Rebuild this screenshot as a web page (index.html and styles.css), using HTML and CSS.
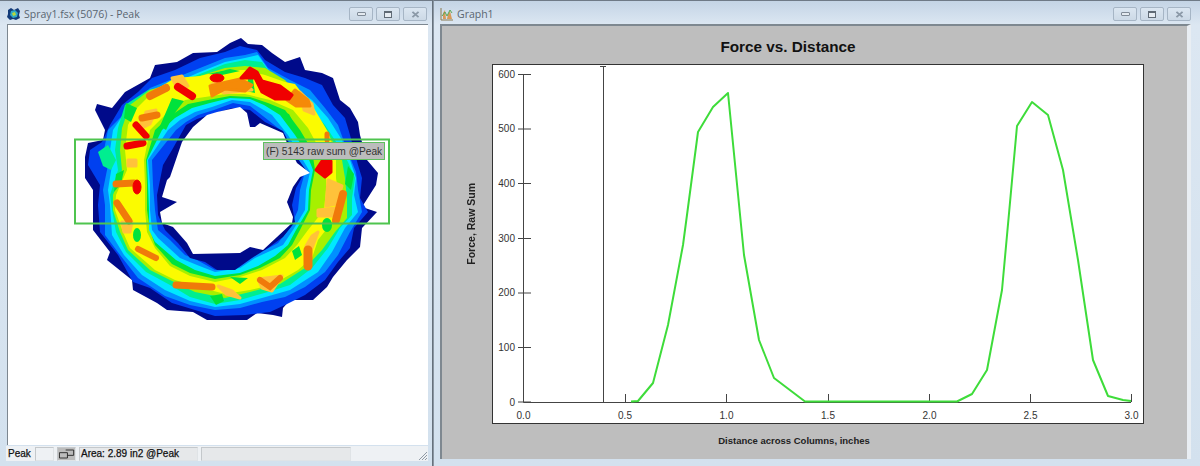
FILE: index.html
```html
<!DOCTYPE html>
<html lang="en">
<head>
<meta charset="utf-8">
<title>Spray1 and Graph1</title>
<link rel="stylesheet" href="styles.css">
</head>
<body>
<div class="desktop">
  <section class="win win-map">
    <header class="titlebar">
      <svg class="app-icon" viewBox="0 0 14 14"><path d="M1 3 4 1l3 2 4-2 2 3-1 4 1 3-4 2-3-1-3 1-3-3 1-3z" fill="#123a78"/><path d="M4 4l4-1 3 3-1 4-4 1-3-3z" fill="#2fa7c8"/><path d="M5 6l3-1 1 3-3 1z" fill="#b8d83a"/></svg>
      <span class="title">Spray1.fsx (5076) - Peak</span>
      <div class="buttons">
        <span class="btn"><i class="g-min"></i></span><span class="btn"><i class="g-max"></i></span><span class="btn"><svg class="g-close" viewBox="0 0 10 8"><path d="M1.500 1 8.500 7M8.500 1 1.500 7" stroke="#8b99a7" stroke-width="2.200" fill="none"/></svg></span>
      </div>
    </header>
    <div class="client map-client">
      <svg class="map" viewBox="8 25 419 420">
        <g class="ring">
        <polygon class="navy" points="241,38 248,44 262,45 272,53 285,62 300,57 305,70 322,73 333,78 340,100 350,108 358,122 360,135 367,160 378,173 376,185 362,207 377,212 362,228 360,247 347,260 333,277 327,287 313,300 290,300 283,308 282,317 273,315 257,313 247,320 207,320 193,312 167,310 157,303 133,290 132,280 107,260 110,252 93,230 93,190 85,178 85,157 88,143 103,140 105,130 95,110 97,104 112,108 125,92 150,78 155,65 177,62 193,53 217,52 230,43"/>
        <polygon class="blue" points="152,78 175,70 200,58 225,52 240,46 257,50 265,60 285,72 305,78 322,85 333,105 345,118 350,135 358,165 362,178 360,198 368,212 354,228 350,248 338,262 325,280 305,295 285,305 270,312 245,315 215,316 195,310 172,303 150,288 133,282 118,255 100,232 98,205 100,185 88,165 90,150 102,142 110,125 122,105 138,92"/>
        <polygon class="azure" points="150,88 175,78 200,68 225,58 245,55 257,52 268,68 290,80 310,90 325,108 338,125 347,150 356,172 358,190 362,212 350,232 338,255 325,272 305,287 285,297 262,302 240,308 215,310 190,305 165,296 138,278 120,255 105,235 105,205 103,190 108,165 104,150 108,130 130,108"/>
        <polygon class="cyan" points="145,95 172,84 200,72 225,62 245,58 258,55 270,72 295,88 312,100 328,118 342,140 350,160 356,178 354,195 358,212 345,228 332,252 318,272 290,290 262,298 240,304 215,307 190,301 165,290 142,275 124,255 112,235 110,205 108,190 112,165 110,150 113,130 125,112"/>
        <polygon class="spring" points="125,105 148,90 172,86 200,74 225,64 245,60 262,62 275,80 295,92 308,105 325,125 338,145 348,162 355,178 352,198 352,215 340,228 328,248 312,268 290,285 268,292 240,300 215,304 190,297 170,285 146,272 126,252 116,232 112,210 110,195 118,170 115,150 118,128"/>
        <polygon class="lime" points="130,105 150,90 175,82 200,76 225,68 245,66 265,68 285,80 298,95 318,120 332,140 342,160 345,178 347,200 347,218 335,232 322,250 305,268 280,284 250,292 225,298 195,292 170,280 150,270 128,250 120,232 113,210 113,195 122,170 120,150 122,128"/>
        <polygon class="yellow" points="137,108 155,90 175,78 200,76 225,70 245,70 265,75 285,82 295,84 315,110 328,132 336,155 336,178 340,205 332,222 318,240 312,258 298,270 272,285 250,290 225,294 195,286 175,280 155,270 130,248 123,232 115,210 116,195 127,170 125,150 128,125"/>
        <polygon class="lime" points="150,130 165,115 185,100 205,97 225,94 245,94 270,100 293,110 308,128 320,150 326,170 326,190 324,210 308,230 297,245 285,258 262,270 240,277 215,282 190,276 170,266 155,248 147,232 145,210 145,185 144,160"/>
        <polygon class="green" points="155,130 170,116 188,104 208,100 230,96 250,97 268,103 285,110 300,130 312,150 315,170 311,190 310,210 300,230 292,245 280,258 260,268 240,275 215,279 190,273 172,264 155,245 150,230 147,210 147,185 146,160"/>
        <polygon class="cyan" points="162,130 175,118 192,108 210,103 230,98 250,99 264,105 280,115 295,135 306,152 313,170 309,190 308,210 296,230 288,245 275,256 258,266 240,273 215,276 195,270 176,260 155,242 149,230 149,210 148,185 147,160"/>
        <polygon class="azure" points="168,130 180,120 195,112 212,107 232,100 250,102 272,115 288,135 300,155 310,172 306,190 305,210 293,230 283,245 268,252 255,258 240,268 215,272 197,265 180,258 158,238 152,230 150,210 150,185 148,160"/>
        <polygon class="blue" points="176,130 186,122 198,115 214,110 233,103 250,106 268,120 283,132 298,158 305,172 300,190 298,210 290,228 278,243 265,250 250,255 240,265 215,270 197,260 185,255 170,240 158,230 155,210 153,185 152,160"/>
        <polygon class="navy" points="186,125 197,119 215,113 232,108 250,110 265,122 283,131 295,155 306,170 296,188 292,205 295,222 283,237 268,248 252,258 235,270 217,270 205,262 190,258 178,243 165,230 158,215 157,195 163,165 172,150"/>
        <polygon class="hole" points="217,112 240,107 247,113 250,127 255,127 260,123 283,133 287,143 297,163 310,173 300,177 293,187 287,202 293,217 292,223 277,237 263,250 250,247 240,253 193,254 187,243 173,227 162,223 160,212 177,202 162,197 167,180 170,177 182,142 193,127 207,115"/>

        <polygon class="spring" points="98,152 108,145 116,160 111,170 103,166"/>
        <polygon class="green" points="126,103 137,108 131,122 124,118"/>
        <polygon class="green" points="172,98 184,101 174,114 166,130 160,126"/>
        <polygon class="green" points="116,174 124,170 121,184 114,192"/>
        <polygon class="green" points="208,74 230,69 240,71 222,75"/>
        <polygon class="green" points="249,74 252,72 255,93 246,91"/>
        <polygon class="green" points="280,111 289,114 296,128 285,121"/>
        <polygon class="green" points="348,166 354,174 351,190 345,184"/>
        <polygon class="green" points="292,251 299,246 302,255 295,260"/>
        <polygon class="green" points="230,277 248,278 240,284"/>
        <polygon class="green" points="210,296 222,294 224,301 216,305"/>
        <g class="soft gold">
          <polygon points="172,78 182,76 188,86 178,90"/>
          <polygon points="146,112 156,110 150,124 138,130"/>
          <polygon points="122,222 132,222 130,232 124,232"/>
          <polygon points="300,92 312,104 314,114 304,110"/>
          <polygon points="328,180 342,186 336,204 326,206"/>
          <polygon points="318,210 336,208 332,216 318,216"/>
          <polygon points="312,236 318,232 312,248 306,246"/>
          <polygon points="218,286 232,291 240,298 226,294"/>
          <polygon points="258,279 282,276 272,291 262,288"/>
          <polygon points="212,84 240,80 252,90 224,93"/>
          <polygon points="128,160 136,160 136,166 128,166"/>
        </g>
        <ellipse class="green" cx="137" cy="235" rx="4" ry="7"/>
        <ellipse class="green" cx="327" cy="225" rx="5" ry="7"/>
        <polyline class="o-line w8" points="150,96 166,88"/>
        <polyline class="o-line w7" points="142,118 157,115"/>
        <polyline class="o-line w7" points="117,203 129,221"/>
        <polyline class="o-line w7" points="116,184 134,183"/>
        <polyline class="o-line w6" points="138,249 156,258"/>
        <polyline class="o-line w7" points="176,285 212,287"/>
        <polyline class="o-line w6" points="260,280 270,287 280,278"/>
        <polyline class="o-line w9" points="308,250 308,266"/>
        <polyline class="o-line w8" points="343,194 336,220"/>
        <polyline class="o-line w5" points="327,134 327,140"/>
        <polygon class="orange soft" points="210,86 240,79 252,85 245,91 225,89 212,96"/>
        <polygon class="orange soft" points="295,90 308,100 310,106 296,106 287,100"/>
        <polyline class="r-line w8" points="178,87 192,96"/>
        <polyline class="r-line w7" points="136,125 146,136"/>
        <polyline class="r-line w7" points="127,146 143,143"/>
        <ellipse class="red" cx="137" cy="187" rx="4" ry="7"/>
        <ellipse class="red" cx="217" cy="78" rx="7" ry="4"/>
        <polygon class="red soft" points="241,78 250,68 257,72 262,81 280,86 292,95 289,99 275,99 262,92 255,78"/>
        <polygon class="red soft" points="316,170 322,161 331,161 331,172 325,177"/>
        </g>
        <rect class="sel" x="75" y="139.500" width="314" height="84"/>
        <rect class="tag" x="263.500" y="142.500" width="121" height="17"/>
        <text class="tag-text" x="266" y="155">(F) 5143 raw sum @Peak</text>
      </svg>
    </div>
    <footer class="statusbar">
      <span class="cell c-peak">Peak</span>
      <span class="cell c-empty"></span>
      <span class="cell c-icon"><svg viewBox="0 0 18 10"><path d="M.5 3.500h9v6h-9zM7.500.5h9v6h-7" fill="none" stroke="#222"/></svg></span>
      <span class="cell c-area">Area: 2.89 in2 @Peak</span>
      <span class="cell c-blank"></span>
      <svg class="grip" viewBox="0 0 10 10"><path d="M9 1 1 9M9 4 4 9M9 7 7 9" stroke="#8f9aa5" stroke-width="1"/></svg>
    </footer>
  </section>

  <section class="win win-graph">
    <header class="titlebar">
      <svg class="app-icon" viewBox="0 0 14 14"><path d="M1 1v12h12" fill="none" stroke="#8a7a50"/><path d="M3 12V6l2-3 1 9zM7 12l1-5 2-3 2 8z" fill="#d89a5a"/><path d="M2 9l3-4 2 4 3-6 2 3" fill="none" stroke="#58a858"/></svg>
      <span class="title">Graph1</span>
      <div class="buttons">
        <span class="btn"><i class="g-min"></i></span><span class="btn"><i class="g-max"></i></span><span class="btn"><svg class="g-close" viewBox="0 0 10 8"><path d="M1.500 1 8.500 7M8.500 1 1.500 7" stroke="#8b99a7" stroke-width="2.200" fill="none"/></svg></span>
      </div>
    </header>
    <div class="client graph-client">
      <h1 class="chart-title">Force vs. Distance</h1>
      <div class="chart-mid">
        <div class="y-title"><span>Force, Raw Sum</span></div>
        <svg class="plot" viewBox="493 65 650 358">
          <path class="axis" d="M523.500 74v328.500H1131M518 74.500h13M518 129h13M518 183.500h13M518 238.500h13M518 293h13M518 347.500h13M518 402h13M625.500 394v8M726.500 394v8M828.500 394v8M929.500 394v8M1030.500 394v8M1131.500 394v8"/>
          <path class="cursor" d="M603.500 66v336M600 66.500h6"/>
          <polyline class="curve" points="631,401.500 638,401 653,383 668,325 683,245 698,132 713,107 728,93 744,255 759,340 774,378 805,401.500 957,401.500 972,394 987,370 1002,290 1017,126 1032,102 1048,115 1063,170 1078,260 1093,360 1108,396 1123,400 1131,401"/>
          <g class="y-nums">
            <text x="515" y="78">600</text><text x="515" y="132">500</text><text x="515" y="187">400</text><text x="515" y="242">300</text><text x="515" y="296">200</text><text x="515" y="351">100</text><text x="515" y="406">0</text>
          </g>
          <g class="x-nums">
            <text x="523.500" y="419">0.0</text><text x="625" y="419">0.5</text><text x="726.500" y="419">1.0</text><text x="828" y="419">1.5</text><text x="929.500" y="419">2.0</text><text x="1030.500" y="419">2.5</text><text x="1131.500" y="419">3.0</text>
          </g>
        </svg>
      </div>
      <div class="x-title">Distance across Columns, inches</div>
    </div>
    <div class="win-foot"></div>
  </section>
</div>
</body>
</html>
```
FILE: styles.css
```css
html, body { margin: 0; height: 100%; overflow: hidden; }
body { background: #d6e3f0; font-family: "Liberation Sans", Arial, sans-serif; }
.desktop { display: flex; width: 1200px; height: 466px; }

.win {
  display: flex; flex-direction: column; height: 466px; box-sizing: border-box;
  background: linear-gradient(#c4d4e5 0, #dce7f2 24px, #d3e1ee 100%);
  border-top: 1px solid #6f7a86;
}
.win-map { width: 433px; border-right: 1px solid #66717c; padding: 0 4px 0 7px; }
.win-graph { width: 767px; border-left: 1px solid #8a96a2; padding: 0 8px 0 6px; }

.titlebar { display: flex; align-items: center; height: 23px; flex: none; padding-top: 3px; box-sizing: border-box; }
.app-icon { width: 14px; height: 14px; margin-right: 3px; flex: none; }
.title { font: 10.500px "Open Sans", sans-serif; color: #596570; }
.buttons { display: flex; gap: 3px; margin-left: auto; margin-right: 1px; }
.btn {
  display: flex; align-items: center; justify-content: center; box-sizing: border-box;
  width: 24px; height: 14px; border: 1px solid #a6b5c5; border-radius: 2px;
  background: linear-gradient(#dbe6f1, #ccd9e6);
}
.g-min { display: block; width: 9px; height: 4px; box-sizing: border-box; border: 1px solid #7f8a96; background: #e4eaf0; border-radius: 1px; }
.g-max { display: block; width: 8px; height: 7px; box-sizing: border-box; border: 1px solid #5f6a75; border-top-width: 2px; background: #e6ecf2; }
.g-close { width: 9px; height: 7px; }

.client { box-sizing: border-box; }
.map-client { width: 421px; height: 421px; background: #fff; border: 1px solid #7d8790; border-bottom: 0; border-right: 0; overflow: hidden; }
.map { display: block; width: 419px; height: 420px; }

.ring { filter: blur(0.7px); }
.navy { fill: #000a8a; }
.blue { fill: #0040f0; }
.azure { fill: #0090ff; }
.cyan { fill: #00e8ff; }
.spring { fill: #00ee90; }
.green { fill: #00e23c; }
.lime { fill: #a6f000; }
.yellow { fill: #fbfb00; }
.gold { fill: #ffc23a; stroke: #ffc23a; }
.orange { fill: #f58a08; stroke: #f58a08; }
.red { fill: #f00000; stroke: #f00000; }
.hole { fill: #fff; }
.soft { stroke-width: 3; stroke-linejoin: round; }
.o-line { fill: none; stroke: #f07a0a; stroke-linecap: round; }
.r-line { fill: none; stroke: #f00000; stroke-linecap: round; }
.w5 { stroke-width: 5; }
.w6 { stroke-width: 6; }
.w7 { stroke-width: 7; }
.w8 { stroke-width: 8; }
.w9 { stroke-width: 9; }
.sel { fill: none; stroke: #4fc44f; stroke-width: 2; }
.tag { fill: #bcbcbc; stroke: #5fc05f; stroke-width: 1; }
.tag-text { font: 10.200px "Liberation Sans", sans-serif; fill: #333; }

.statusbar { display: flex; align-items: stretch; height: 15px; flex: none; background: #eef1f4; padding: 1px 0 0; box-sizing: border-box; width: 422px; margin-left: -1px; margin-top: 1px; }
.cell { box-sizing: border-box; border: 1px solid #dfe3e6; border-left-color: #c4c8cb; border-top-color: #c4c8cb; font-size: 10px; line-height: 12px; color: #111; padding-left: 1px; white-space: nowrap; -webkit-text-stroke: 0.25px #111; }
.c-peak { width: 28px; border-color: transparent; }
.c-empty { width: 19px; margin-left: 1px; }
.c-icon { width: 19px; margin-left: 3px; background: #bcbcbc; display: flex; align-items: center; justify-content: center; }
.c-icon svg { width: 18px; height: 10px; }
.c-area { width: 119px; margin-left: 3px; background: #e6e8ea; }
.c-blank { width: 150px; margin-left: 3px; background: #e6e8ea; }
.grip { width: 10px; height: 10px; margin: 4px 0 0 auto; }

.graph-client {
  display: grid; grid-template-rows: 38px 360px 1fr; width: 751px; height: 435px;
  background: #bebebe; border: 2px solid #7e8890; border-bottom: 0; border-right: 4px solid #e9eef3;
}
.chart-title { margin: 0; font: bold 15.300px "Liberation Sans", sans-serif; text-align: center; color: #111; padding: 12px 53px 0 0; }
.chart-mid { display: flex; padding-left: 16px; }
.y-title { width: 26px; margin-right: 8px; padding-bottom: 41px; box-sizing: border-box; display: flex; align-items: center; justify-content: center; }
.y-title span { writing-mode: vertical-rl; transform: rotate(180deg); font: bold 10.500px "Liberation Sans", sans-serif; color: #222; white-space: nowrap; }
.plot { display: block; width: 650px; height: 358px; background: #fff; border: 1px solid #333; }
.x-title { font: bold 9.500px "Liberation Sans", sans-serif; text-align: center; color: #222; padding: 11px 41px 0 0; }
.win-foot { flex: 1; }

.axis { fill: none; stroke: #444; stroke-width: 1; }
.cursor { fill: none; stroke: #444; stroke-width: 1; }
.curve { fill: none; stroke: #3edc3a; stroke-width: 2; stroke-linejoin: round; }
.y-nums text { font: 10px "Liberation Sans", sans-serif; fill: #333; text-anchor: end; }
.x-nums text { font: 10px "Liberation Sans", sans-serif; fill: #333; text-anchor: middle; }
```
